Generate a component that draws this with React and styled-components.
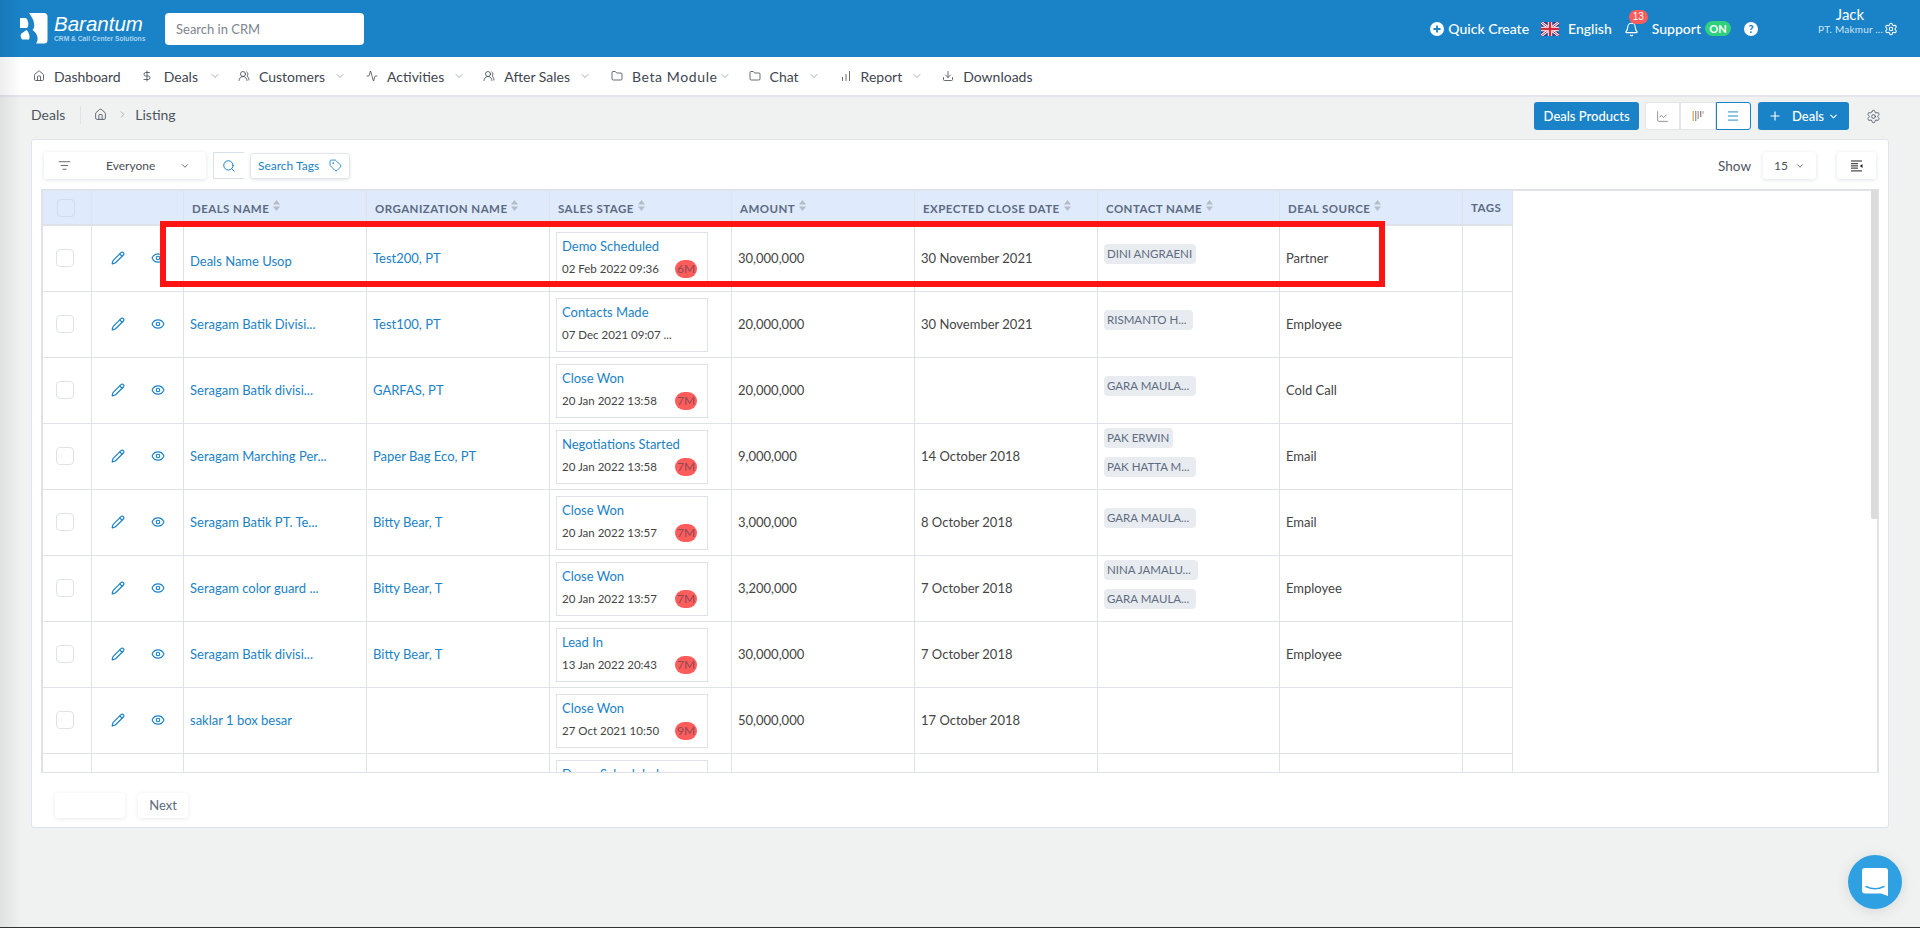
import React from "react";
import styled, { createGlobalStyle } from "styled-components";
import {
  House, DollarSign, UsersRound, Activity, Folder, ChartNoAxesColumnIncreasing, Download,
  ChevronDown, ChevronRight, Plus, Settings, ChartLine, Menu, ListFilter, Search, Tag, Pencil, Eye, Bell,
} from "lucide-react";

const Global = createGlobalStyle`
  html, body { margin: 0; padding: 0; height: 100%; overflow: hidden; background: #f0f2f2; }
  body { font-family: Lato, "Open Sans", sans-serif; color: #444; }
  * { box-sizing: border-box; }
`;

const Page = styled.div`
  position: relative;
  height: 928px;
  display: flex;
  flex-direction: column;
  overflow: hidden;
  border-bottom: 1px solid #333;
`;
const EdgeShade = styled.div`
  position: absolute;
  left: 0; top: 0; bottom: 0;
  width: 22px;
  background: linear-gradient(to right, rgba(0,0,0,.07), rgba(0,0,0,0));
  pointer-events: none;
`;
const TopBar = styled.header`
  height: 57px;
  flex: none;
  background: #1a82c7;
  color: #fff;
  display: flex;
  align-items: center;
  justify-content: space-between;
  padding: 0 22px 0 20px;
`;
const Brand = styled.div`display: flex; align-items: center; gap: 6px; width: 125px; margin-right: 20px; svg { flex: none; }`;
const BrandText = styled.div`display: flex; flex-direction: column;`;
const BrandName = styled.span`
  font-family: "Liberation Sans", Arial, sans-serif;
  font-style: italic;
  font-size: 20.5px;
  line-height: 21px;
`;
const BrandTag = styled.span`
  font-family: "Liberation Sans", Arial, sans-serif;
  font-size: 6.7px;
  font-weight: 700;
  line-height: 10px;
  color: #a9d3ef;
  white-space: nowrap;
`;
const Left = styled.div`display: flex; align-items: center;`;
const SearchBox = styled.div`
  width: 199px;
  height: 32px;
  background: #fff;
  border-radius: 4px;
  display: flex;
  align-items: center;
  padding-left: 11px;
  font-size: 13px;
  color: #7d8590;
`;
const Right = styled.div`display: flex; align-items: center; height: 100%;`;
const TopItem = styled.div`
  display: flex;
  align-items: center;
  gap: ${p => p.$gap ?? 4}px;
  margin-right: ${p => p.$mr ?? 12}px;
  font-size: 14px;
  font-weight: 500;
  white-space: nowrap;
`;
const BellWrap = styled.div`
  position: relative;
  width: 15px;
  height: 15px;
  margin: 2px 13px 0 0;
  display: flex;
`;
const BellBadge = styled.span`
  position: absolute;
  left: 5px; top: -12px;
  width: 19px; height: 14px;
  border-radius: 7px;
  background: #ff5c5c;
  font-family: "Liberation Sans", Arial, sans-serif;
  font-size: 10px;
  line-height: 14px;
  text-align: center;
  color: #fff;
`;
const OnPill = styled.span`
  width: 26px; height: 15px;
  border-radius: 8px;
  background: #2fd17c;
  font-size: 11px;
  line-height: 15px;
  text-align: center;
  font-weight: 700;
`;
const Help = styled.span`
  width: 14px; height: 14px;
  border-radius: 50%;
  background: #fff;
  color: #1a82c7;
  font-size: 11px;
  font-weight: 900;
  line-height: 14px;
  text-align: center;
  margin-right: 60px;
`;
const User = styled.div`
  display: flex;
  flex-direction: column;
  align-self: flex-start;
  margin-top: 6px;
  width: 80px;
`;
const UserName = styled.span`width: 64px; text-align: center; font-size: 15px; line-height: 16px;`;
const UserOrg = styled.div`
  display: flex;
  align-items: center;
  justify-content: space-between;
  font-size: 10px;
  line-height: 14px;
  color: #cfe6f6;
  letter-spacing: .2px;
  white-space: nowrap;
`;

const Nav = styled.nav`
  height: 40px;
  flex: none;
  background: #fff;
  border-bottom: 2px solid #e3e6ea;
  display: flex;
  align-items: center;
  padding-left: 33px;
`;
const NavItem = styled.div`
  display: flex;
  align-items: center;
  gap: ${p => p.$gap ?? 9}px;
  margin-right: ${p => p.$mr ?? 20}px;
  font-size: 14px;
  letter-spacing: ${p => p.$tracking ?? 0}px;
  color: #3f4650;
  white-space: nowrap;
`;
const Chevron = styled(ChevronDown)`color: #8a93a0; margin-left: ${p => p.$pull ?? 0}px;`;

const SubRow = styled.div`
  height: 42px;
  flex: none;
  display: flex;
  align-items: center;
  justify-content: space-between;
  padding: 0 39px 4px 31px;
`;
const Crumbs = styled.div`display: flex; align-items: center; font-size: 14px; color: #4e5560; margin-bottom: 3px;`;
const CrumbDivider = styled.span`width: 1px; height: 18px; background: #dfe2e6; margin: 0 13px 0 15px;`;
const CrumbSep = styled(ChevronRight)`margin: 0 7px 0 10px; color: #8a93a0;`;
const Actions = styled.div`display: flex; align-items: center;`;
const PrimaryButton = styled.button`
  height: 28px;
  border: 0;
  border-radius: 3px;
  background: #1a82c7;
  color: #fff;
  font: 500 13px Lato, sans-serif;
  display: flex;
  align-items: center;
  justify-content: center;
  width: ${p => p.$w}px;
  gap: ${p => p.$gap ?? 0}px;
  margin-right: ${p => p.$mr}px;
  padding: 0;
`;
const PlusMark = styled(Plus)`margin-right: 6px;`;
const ViewGroup = styled.div`display: flex; margin-right: 7px;`;
const ViewButton = styled.div`
  width: 35.3px;
  height: 28px;
  background: #fff;
  display: flex;
  align-items: center;
  justify-content: center;
  border: 1px solid ${p => (p.$active ? "#1a82c7" : "#e2e6ea")};
  border-radius: ${p => p.$radius};
  color: ${p => (p.$active ? "#1a82c7" : "#5a6270")};
`;

const Card = styled.section`
  height: 689px;
  flex: none;
  margin: 0 31px;
  background: #fff;
  border: 1px solid #dde4ed;
  border-radius: 3px;
  padding: 0 9px;
  display: flex;
  flex-direction: column;
`;
const Toolbar = styled.div`
  height: 49px;
  flex: none;
  display: flex;
  align-items: center;
  padding: 2px 3px 0;
`;
const SelectBox = styled.div`
  height: 27px;
  width: ${p => p.$w}px;
  margin-left: ${p => p.$ml ?? 0}px;
  background: #fff;
  border-radius: 3px;
  box-shadow: 0 1px 4px rgba(40,60,90,.14);
  display: flex;
  align-items: center;
  justify-content: ${p => p.$center ? "center" : "flex-start"};
  gap: ${p => p.$gap ?? 0}px;
  font-size: 12px;
  color: #4a4f57;
`;
const FilterLabel = styled.span`margin: 0 25px 0 36px;`;
const FilterIcon = styled(ListFilter)`margin-left: 14px; margin-right: -1px; color: #555;`;
const SearchButton = styled.div`
  width: 31px;
  height: 27px;
  margin: 0 6px 0 7px;
  border: 1px solid #d8dfe8;
  border-right: 0;
  border-radius: 2px 0 0 2px;
  display: flex;
  align-items: center;
  justify-content: center;
  color: #1a82c7;
`;
const TagsButton = styled.div`
  width: 100px;
  height: 26px;
  border: 1px solid #e2e6ec;
  border-radius: 3px;
  box-shadow: 0 1px 3px rgba(40,60,90,.14);
  display: flex;
  align-items: center;
  justify-content: center;
  gap: 10px;
  font-size: 12px;
  color: #1a82c7;
`;
const ToolSpacer = styled.div`flex: 1;`;
const ShowLabel = styled.span`font-size: 13.5px; color: #4e5560; margin-right: 12px;`;

const TableArea = styled.div`
  position: relative;
  height: 584px;
  flex: none;
`;
const TableWrap = styled.div`
  height: 100%;
  border: 2px solid #dfe3e9;
  border-bottom-width: 1px;
  overflow: hidden;
`;
const ScrollThumb = styled.div`
  position: absolute;
  right: 1px; top: 0;
  width: 7px; height: 330px;
  background: #dcdcdc;
  border-radius: 2px;
`;
const Table = styled.table`
  table-layout: fixed;
  width: 1470px;
  border-collapse: separate;
  border-spacing: 0;
`;
const HeadCell = styled.th`
  height: 35px;
  padding: 0 0 1px 8px;
  background: #dfeafc;
  border-right: 1px solid #dfe3e9;
  border-bottom: 2px solid #dfe3e9;
  text-align: left;
  font-size: 11.5px;
  font-weight: 700;
  letter-spacing: .45px;
  color: #5c6b82;
  white-space: nowrap;
  text-transform: uppercase;
`;
const HeadCheckCell = styled(HeadCell)`padding: 0;`;
const HeadCheck = styled.span`
  display: block;
  width: 18px; height: 18px;
  margin: 0 0 0 14px;
  border: 1px solid #d3dbe6;
  border-radius: 4px;
`;
const Sort = styled.svg`margin-left: 4px; vertical-align: 2px;`;
const Cell = styled.td`
  height: 66px;
  padding: 0 0 0 6px;
  border-right: 1px solid #dfe3e9;
  border-bottom: 1px solid #dfe3e9;
  font-size: 13px;
  color: #444;
  white-space: nowrap;
  overflow: hidden;
`;
const TextCell = styled(Cell)`padding-bottom: 2px;`;
const CheckCell = styled(Cell)`padding: 0 0 0 13px;`;
const RowCheck = styled.span`
  display: block;
  width: 18px; height: 18px;
  margin-bottom: 2px;
  background: #fff;
  border: 1px solid #dfe3e9;
  border-radius: 4px;
`;
const IconCell = styled(Cell)`padding: 0;`;
const RowIcons = styled.div`
  display: flex;
  align-items: center;
  gap: 26px;
  padding: 0 0 2px 19px;
  color: #1a82c7;
`;
const LinkText = styled.a`
  display: block;
  color: #1a82c7;
  padding-top: ${p => (p.$low ? 7 : 0)}px;
`;
const StageBox = styled.div`
  width: 152px;
  height: 54px;
  border: 1px solid #dfe3e9;
  padding: 4px 10px 0 5px;
`;
const StageName = styled.div`font-size: 13px; line-height: 18px; color: #1a82c7;`;
const StageMeta = styled.div`
  display: flex;
  align-items: center;
  justify-content: space-between;
  height: 20px;
  margin-top: 4px;
  font-size: 11.5px;
  color: #444;
`;
const Age = styled.span`
  width: 22px; height: 18px;
  border-radius: 9px;
  background: #ff5c5c;
  color: #8f4a55;
  font-size: 12px;
  line-height: 18px;
  text-align: center;
`;
const Chips = styled.div`
  display: flex;
  flex-direction: column;
  align-items: flex-start;
  gap: 9px;
  padding-bottom: 9px;
`;
const Chip = styled.span`
  height: 20px;
  padding: 0 ${p => (p.$cut ? 7 : 4)}px 0 3px;
  border-radius: 4px;
  background: #e8ebf0;
  color: #5e6c80;
  font-size: 11.5px;
  line-height: 20px;
`;
const Pager = styled.div`
  flex: 1;
  display: flex;
  gap: 13px;
  padding: 20px 0 0 14px;
`;
const PageButton = styled.div`
  width: ${p => p.$w}px;
  height: 25px;
  border-radius: 3px;
  background: #fff;
  box-shadow: 0 1px 4px rgba(40,60,90,.1);
  font-size: 13px;
  line-height: 25px;
  text-align: center;
  color: #5a6a7e;
`;
const Annotation = styled.div`
  position: absolute;
  left: 160px; top: 221px;
  width: 1225px; height: 66px;
  border: 6px solid #ff1414;
  pointer-events: none;
`;
const ChatBubble = styled.div`
  position: absolute;
  left: 1848px; top: 855px;
  width: 54px; height: 54px;
  border-radius: 50%;
  background: #2fa1e3;
  box-shadow: 0 2px 14px rgba(0,0,0,.1);
  display: flex;
  align-items: center;
  justify-content: center;
`;

const LogoMark = () => (
  <svg width="28" height="31" viewBox="0 0 28 31" fill="#fff">
    <path d="M9 0H24Q27.5 0 27.5 3.5V27Q27.5 30.5 24 30.5H16C19 27 18 21 12.5 17C15.5 14 15 8 9 0Z" />
    <path d="M0 5H6C8.5 7.5 9 12 7.2 15H0Z" />
    <path d="M6.5 17C9.2 19.5 10.2 23.5 9 26.5H2Q-.5 22.5 1.5 20.5Z" />
  </svg>
);
const PlusCircle = () => (
  <svg width="14" height="14" viewBox="0 0 14 14">
    <circle cx="7" cy="7" r="7" fill="#fff" />
    <path d="M7 3.5V10.5M3.5 7H10.5" stroke="#1a82c7" strokeWidth="1.8" />
  </svg>
);
const UkFlag = () => (
  <svg width="18" height="14" viewBox="0 0 18 14">
    <rect width="18" height="14" fill="#2b3f8f" />
    <path d="M0 0L18 14M18 0L0 14" stroke="#fff" strokeWidth="2.6" />
    <path d="M0 0L18 14M18 0L0 14" stroke="#d8283c" strokeWidth="1" />
    <path d="M9 0V14M0 7H18" stroke="#fff" strokeWidth="4.4" />
    <path d="M9 0V14M0 7H18" stroke="#d8283c" strokeWidth="2.4" />
  </svg>
);
const KanbanBars = () => (
  <svg width="12" height="12" viewBox="0 0 12 12">
    <rect x="0.5" y="1" width="1.4" height="10" fill="#e0b060" />
    <rect x="3" y="1" width="1.4" height="10" fill="#7fa4c9" />
    <rect x="5.5" y="1" width="1.4" height="8" fill="#d09a80" />
    <rect x="8" y="1" width="1.4" height="6" fill="#8a8f98" />
    <rect x="10.5" y="1" width="1.2" height="3" fill="#b0b4bc" />
  </svg>
);
const ColumnsIcon = () => (
  <svg width="12" height="12" viewBox="0 0 12 12" fill="#222">
    <rect x="0" y="0.5" width="11" height="1" />
    <rect x="0" y="3.2" width="7" height="1" />
    <rect x="0" y="5.4" width="7" height="1" />
    <rect x="0" y="7.6" width="7" height="1" />
    <rect x="0" y="10.4" width="11" height="1" />
    <path d="M11.5 4V8L8.8 6Z" />
  </svg>
);
const SortIcon = () => (
  <Sort width="7" height="11" viewBox="0 0 7 11" fill="#b6bcc6">
    <path d="M3.5 0L7 4.5H0Z" />
    <path d="M3.5 11L0 6.5H7Z" />
  </Sort>
);
const ChatIcon = () => (
  <svg width="26" height="28" viewBox="0 0 26 28">
    <path d="M3 0H23Q26 0 26 3V28L19 25.5H3Q0 25.5 0 22.5V3Q0 0 3 0Z" fill="#fff" />
    <path d="M4 18.5Q13 23 22 18.5" stroke="#2fa1e3" strokeWidth="1.4" fill="none" strokeLinecap="round" />
  </svg>
);

const navItems = [
  { label: "Dashboard", Icon: House, gap: 9 },
  { label: "Deals", Icon: DollarSign, menu: true, gap: 11, mr: 17 },
  { label: "Customers", Icon: UsersRound, menu: true },
  { label: "Activities", Icon: Activity, menu: true, mr: 18 },
  { label: "After Sales", Icon: UsersRound, menu: true },
  { label: "Beta Module", Icon: Folder, menu: true, tracking: 0.6, pull: -8, mr: 18 },
  { label: "Chat", Icon: Folder, menu: true },
  { label: "Report", Icon: ChartNoAxesColumnIncreasing, menu: true, mr: 19 },
  { label: "Downloads", Icon: Download },
];

const columns = ["Deals Name", "Organization Name", "Sales Stage", "Amount", "Expected Close Date", "Contact Name", "Deal Source"];
const colWidths = [49, 92, 183, 183, 182, 183, 183, 182, 183, 50];

const rows = [
  { name: "Deals Name Usop", low: true, org: "Test200, PT", stage: "Demo Scheduled", date: "02 Feb 2022 09:36", age: "6M", amount: "30,000,000", close: "30 November 2021", contacts: ["DINI ANGRAENI"], source: "Partner" },
  { name: "Seragam Batik Divisi...", org: "Test100, PT", stage: "Contacts Made", date: "07 Dec 2021 09:07 ...", amount: "20,000,000", close: "30 November 2021", contacts: ["RISMANTO H..."], source: "Employee" },
  { name: "Seragam Batik divisi...", org: "GARFAS, PT", stage: "Close Won", date: "20 Jan 2022 13:58", age: "7M", amount: "20,000,000", close: "", contacts: ["GARA MAULA..."], source: "Cold Call" },
  { name: "Seragam Marching Per...", org: "Paper Bag Eco, PT", stage: "Negotiations Started", date: "20 Jan 2022 13:58", age: "7M", amount: "9,000,000", close: "14 October 2018", contacts: ["PAK ERWIN", "PAK HATTA M..."], source: "Email" },
  { name: "Seragam Batik PT. Te...", org: "Bitty Bear, T", stage: "Close Won", date: "20 Jan 2022 13:57", age: "7M", amount: "3,000,000", close: "8 October 2018", contacts: ["GARA MAULA..."], source: "Email" },
  { name: "Seragam color guard ...", org: "Bitty Bear, T", stage: "Close Won", date: "20 Jan 2022 13:57", age: "7M", amount: "3,200,000", close: "7 October 2018", contacts: ["NINA JAMALU...", "GARA MAULA..."], source: "Employee" },
  { name: "Seragam Batik divisi...", org: "Bitty Bear, T", stage: "Lead In", date: "13 Jan 2022 20:43", age: "7M", amount: "30,000,000", close: "7 October 2018", contacts: [], source: "Employee" },
  { name: "saklar 1 box besar", org: "", stage: "Close Won", date: "27 Oct 2021 10:50", age: "9M", amount: "50,000,000", close: "17 October 2018", contacts: [], source: "" },
  { name: "", org: "", stage: "Demo Scheduled", date: "", amount: "", close: "", contacts: [], source: "" },
];

export default function App() {
  return (
    <Page>
      <Global />
      <TopBar>
        <Left>
          <Brand>
            <LogoMark />
            <BrandText>
              <BrandName>Barantum</BrandName>
              <BrandTag>CRM &amp; Call Center Solutions</BrandTag>
            </BrandText>
          </Brand>
          <SearchBox>Search in CRM</SearchBox>
        </Left>
        <Right>
          <TopItem><PlusCircle />Quick Create</TopItem>
          <TopItem $gap={9}><UkFlag />English</TopItem>
          <BellWrap>
            <Bell size={15} strokeWidth={1.8} />
            <BellBadge>13</BellBadge>
          </BellWrap>
          <TopItem $mr={13}>Support<OnPill>ON</OnPill></TopItem>
          <Help>?</Help>
          <User>
            <UserName>Jack</UserName>
            <UserOrg>PT. Makmur ...<Settings size={14} strokeWidth={1.8} color="#fff" /></UserOrg>
          </User>
        </Right>
      </TopBar>

      <Nav>
        {navItems.map(({ label, Icon, menu, gap, mr, tracking, pull }) => (
          <NavItem key={label} $gap={gap} $mr={mr} $tracking={tracking}>
            <Icon size={12} strokeWidth={1.6} />
            <span>{label}</span>
            {menu && <Chevron size={12} strokeWidth={1.5} $pull={pull} />}
          </NavItem>
        ))}
      </Nav>

      <SubRow>
        <Crumbs>
          Deals
          <CrumbDivider />
          <House size={13} strokeWidth={1.6} />
          <CrumbSep size={11} strokeWidth={1.5} />
          Listing
        </Crumbs>
        <Actions>
          <PrimaryButton $w={105} $mr={6}>Deals Products</PrimaryButton>
          <ViewGroup>
            <ViewButton $radius="3px 0 0 3px"><ChartLine size={13} strokeWidth={1.2} /></ViewButton>
            <ViewButton $radius="0"><KanbanBars /></ViewButton>
            <ViewButton $active $radius="0 3px 3px 0"><Menu size={14} strokeWidth={1.6} /></ViewButton>
          </ViewGroup>
          <PrimaryButton $w={91} $mr={17} $gap={4}>
            <PlusMark size={14} strokeWidth={2} />
            Deals
            <ChevronDown size={11} strokeWidth={2.4} />
          </PrimaryButton>
          <Settings size={15} strokeWidth={1.5} color="#5a6270" />
        </Actions>
      </SubRow>

      <Card>
        <Toolbar>
          <SelectBox $w={162}>
            <FilterIcon size={13} strokeWidth={1.6} />
            <FilterLabel>Everyone</FilterLabel>
            <ChevronDown size={10} strokeWidth={2} />
          </SelectBox>
          <SearchButton><Search size={14} strokeWidth={1.7} /></SearchButton>
          <TagsButton>Search Tags<Tag size={13} strokeWidth={1.6} /></TagsButton>
          <ToolSpacer />
          <ShowLabel>Show</ShowLabel>
          <SelectBox $w={53} $center $gap={7}>15<ChevronDown size={10} strokeWidth={2} /></SelectBox>
          <SelectBox $w={39} $center $ml={21}><ColumnsIcon /></SelectBox>
        </Toolbar>

        <TableArea>
          <TableWrap>
            <Table>
              <colgroup>
                {colWidths.map((w, i) => <col key={i} style={{ width: w }} />)}
              </colgroup>
              <thead>
                <tr>
                  <HeadCheckCell><HeadCheck /></HeadCheckCell>
                  <HeadCell />
                  {columns.map(c => <HeadCell key={c}>{c}<SortIcon /></HeadCell>)}
                  <HeadCell>Tags</HeadCell>
                </tr>
              </thead>
              <tbody>
                {rows.map((r, i) => (
                  <tr key={i}>
                    <CheckCell>{r.name && <RowCheck />}</CheckCell>
                    <IconCell>
                      {r.name && (
                        <RowIcons>
                          <Pencil size={14} strokeWidth={2} />
                          <Eye size={14} strokeWidth={2} />
                        </RowIcons>
                      )}
                    </IconCell>
                    <TextCell><LinkText $low={r.low}>{r.name}</LinkText></TextCell>
                    <TextCell><LinkText>{r.org}</LinkText></TextCell>
                    <Cell>
                      <StageBox>
                        <StageName>{r.stage}</StageName>
                        <StageMeta>
                          <span>{r.date}</span>
                          {r.age && <Age>{r.age}</Age>}
                        </StageMeta>
                      </StageBox>
                    </Cell>
                    <TextCell>{r.amount}</TextCell>
                    <TextCell>{r.close}</TextCell>
                    <Cell>
                      {r.contacts.length > 0 && (
                        <Chips>{r.contacts.map(c => <Chip key={c} $cut={c.endsWith("...")}>{c}</Chip>)}</Chips>
                      )}
                    </Cell>
                    <TextCell>{r.source}</TextCell>
                    <Cell />
                  </tr>
                ))}
              </tbody>
            </Table>
          </TableWrap>
          <ScrollThumb />
        </TableArea>

        <Pager>
          <PageButton $w={70} />
          <PageButton $w={50}>Next</PageButton>
        </Pager>
      </Card>

      <EdgeShade />
      <Annotation />
      <ChatBubble><ChatIcon /></ChatBubble>
    </Page>
  );
}
